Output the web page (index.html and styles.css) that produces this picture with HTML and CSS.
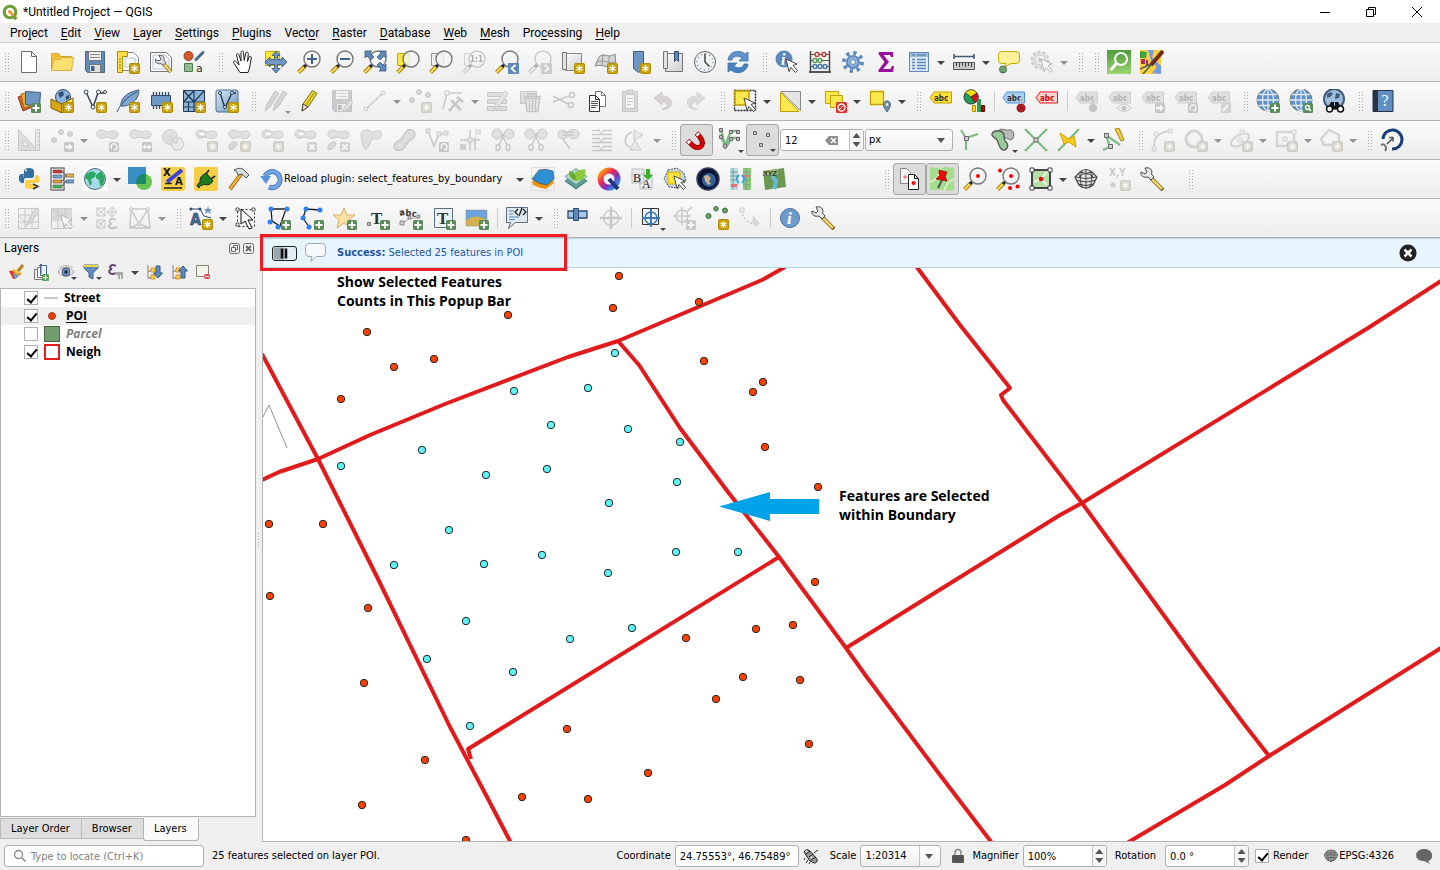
FILE: index.html
```html
<!DOCTYPE html>
<html lang="en">
<head>
<meta charset="utf-8">
<title>*Untitled Project — QGIS</title>
<link rel="stylesheet" href="styles.css">
</head>
<body>
<svg class="paints" aria-hidden="true">
<defs>
<linearGradient id="gGrey" x1="0" y1="0" x2="1" y2="1"><stop offset="0" stop-color="#fff"/><stop offset="1" stop-color="#c8cccb"/></linearGradient>
<linearGradient id="gBlue" x1="0" y1="0" x2="1" y2="1"><stop offset="0" stop-color="#dce8f4"/><stop offset="1" stop-color="#6d97c4"/></linearGradient>
<linearGradient id="gGreen" x1="0" y1="0" x2="0" y2="1"><stop offset="0" stop-color="#4f9a3d"/><stop offset="1" stop-color="#9bd46f"/></linearGradient>
<linearGradient id="gQ" x1="0" y1="0" x2="1" y2="1"><stop offset="0" stop-color="#ffb300"/><stop offset=".35" stop-color="#ee2a57"/><stop offset=".65" stop-color="#7b35c4"/><stop offset="1" stop-color="#13b4e8"/></linearGradient>
</defs>
</svg>
<svg class="sprite" aria-hidden="true">
<symbol id="b-star" viewBox="0 0 24 24"><rect x="13.500" y="13.500" width="10" height="10" rx="1" fill="#c9a10a" stroke="#b08c00"/><path d="M18.500 15v7M15.500 16.700l6 3.600M21.500 16.700l-6 3.600" stroke="#fff" stroke-width="1.300"/><circle cx="18.500" cy="18.500" r="1.600" fill="#fff"/></symbol>
<symbol id="b-plus" viewBox="0 0 24 24"><rect x="14" y="14" width="10" height="10" rx="1.500" fill="#5a8c5a"/><path d="M19 15.500v7M15.500 19h7" stroke="#fff" stroke-width="2"/></symbol>
<symbol id="b-go" viewBox="0 0 24 24"><rect x="14" y="14" width="10" height="10" rx="1.500" fill="#777"/><path d="M15 17.800h4V15.500l4 3.500-4 3.500v-2.300h-4z" fill="#fff"/></symbol>
<symbol id="b-both" viewBox="0 0 24 24"><rect x="14" y="14" width="10" height="10" rx="1.500" fill="#777"/><path d="M14.500 19l3-3v2h3v-2l3 3-3 3v-2h-3v2z" fill="#fff"/></symbol>
<symbol id="b-rot" viewBox="0 0 24 24"><rect x="14" y="14" width="10" height="10" rx="1.500" fill="#777"/><path d="M17 21a3 3 0 1 1 4 0M21.500 19v2.500H19" fill="none" stroke="#fff" stroke-width="1.300"/></symbol>
<symbol id="b-del" viewBox="0 0 24 24"><rect x="14" y="14" width="10" height="10" rx="1.500" fill="#b98a8a"/><path d="M16.500 16.500l5 5M21.500 16.500l-5 5" stroke="#fff" stroke-width="2"/></symbol>
<symbol id="b-lens" viewBox="0 0 24 24"><rect x="14" y="14" width="10" height="10" rx="1.500" fill="#5a8c5a"/><circle cx="18.500" cy="18.500" r="2" fill="none" stroke="#fff" stroke-width="1.300"/><path d="M20 20l2 2" stroke="#fff" stroke-width="1.500"/></symbol>

<symbol id="cursor" viewBox="0 0 24 24"><path d="M11 9l11 5-4 1.500 4.500 5-2 2-4.500-5-2 4z" fill="#fff" stroke="#444"/></symbol>
<symbol id="glass" viewBox="0 0 24 24"><path d="M1.500 22.500L8 16" stroke="#a5811b" stroke-width="4"/><path d="M1.500 22.500L8 16" stroke="#fcd94f" stroke-width="2.200"/><path d="M7 17l3-3" stroke="#222" stroke-width="3"/><circle cx="15" cy="9" r="8" fill="#f2f5f4" fill-opacity=".8" stroke="#777" stroke-width="1.400"/></symbol>
<symbol id="blob" viewBox="0 0 24 24"><path d="M2 6c0-4 4-5 8-3s6 0 9 0c4 0 5 4 3 6s-5 2-7 1-5-1-7 0S2 10 2 6z" fill="#b4bfb4" stroke="#777"/></symbol>
<symbol id="tag" viewBox="0 0 24 24"><path d="M1 8.500l4-5.500h17.500v11H5z"/><text x="5" y="11.500" class="tagtext">abc</text></symbol>

<symbol id="new" viewBox="0 0 24 24"><path d="M4.500 1.500h10l5 5v16h-15zM14.500 1.500v5h5" fill="#fff" stroke="#6b6b6b"/></symbol>
<symbol id="open" viewBox="0 0 24 24"><path d="M1.500 20V3.500h7l2 3h11v13.500z" fill="#f0bf32" stroke="#d3a52f"/><path d="M1.500 20.500L4 9.500h6l2-2h11.500l-2 13z" fill="#ffdf70" stroke="#dcb040"/></symbol>
<symbol id="save" viewBox="0 0 24 24"><path d="M2.500 1.500h19v21h-17l-2-2z" fill="#6189b8" stroke="#49688c"/><path d="M5.500 1.500h13v9h-13z" fill="#eee" stroke="#777"/><path d="M7 4.500h10M7 7.500h10" stroke="#888"/><path d="M6.500 14.500h11v8h-11z" fill="#e0e0e0" stroke="#777"/><path d="M8 16h3.500v5H8z" fill="#3f5f86"/></symbol>
<symbol id="layout" viewBox="0 0 24 24"><path d="M5.500 2.500h12l5 5v13h-17z" fill="#fff" stroke="#888"/><path d="M9 8h10v9H9z" fill="#f4f8fc" stroke="#b3c2d6"/><path d="M1.500 1.500h10v5h-5v16h-5z" fill="#ffdf4c" stroke="#b08c00"/><path d="M3 9h2M3 12h2M3 15h2M3 18h2" stroke="#8a6e00"/><use href="#b-star"/></symbol>
<symbol id="manager" viewBox="0 0 24 24"><path d="M1.500 2.500h16l5 5v14h-21z" fill="#fff" stroke="#777"/><path d="M4 5h12l4 4v10H4z" fill="#f5f8fb" stroke="#b3c2d6"/><path d="M14 13l8 9" stroke="#8a7322" stroke-width="4"/><path d="M14 13l8 9" stroke="#f0d66e" stroke-width="2.500"/><path d="M10 5.500c4-1 6 2 5 5l2 2-3 3-2-2c-4 1-6-1-5.500-4l3.500 1.500 2-2z" fill="#ddd" stroke="#555"/></symbol>
<symbol id="style" viewBox="0 0 24 24"><circle cx="6.500" cy="6" r="4.500" fill="#cf5b2e" stroke="#9b3b18"/><path d="M14 9.500l7-7" stroke="#49688c" stroke-width="3" stroke-linecap="round"/><path d="M2.500 13.500h8v8h-8z" fill="#8cba8c" stroke="#4f7a50"/><text x="14" y="22" font-family="DejaVu Sans" font-size="11" fill="#333">a</text></symbol>
<symbol id="hand" viewBox="0 0 24 24"><path d="M9 22.500L3.500 14c-2.500-3 .5-4 2-2l2.500 3L5.500 5c0-2 2-2 2.500 0l2 6V2.500c0-2 2.500-2 2.500 0l.7 8L14.800 3c.5-1.500 2.500-1 2.500.5l-.8 8L18 7c1-1.500 2.500-.5 2.300 1L18.500 18l-1.500 4.500z" fill="#fff" stroke="#222"/></symbol>
<symbol id="pansel" viewBox="0 0 24 24"><path d="M1.500 1.500h14v14h-14z" fill="#ffe63d" stroke="#cba600"/><path d="M12 1l4 4.500h-2.500v4h4.500V7l5 5-5 5v-2.500h-4.500v4H16L12 23l-4-4.500h2.500v-4H6V17l-5-5 5-5v2.500h4.500v-4H8z" fill="#6d97c4" stroke="#344f70" stroke-width=".8"/></symbol>
<symbol id="zin" viewBox="0 0 24 24"><use href="#glass"/><path d="M15 4v10M10 9h10" stroke="#3c648f" stroke-width="2"/></symbol>
<symbol id="zout" viewBox="0 0 24 24"><use href="#glass"/><path d="M10 9h10" stroke="#3c648f" stroke-width="2"/></symbol>
<symbol id="zfull" viewBox="0 0 24 24"><use href="#glass"/><path d="M2 1h7L7 3l4 4-3 3-4-4-2 2zM23 1h-7l2 2-4 4 3 3 4-4 2 2zM23 21h-7l2-2-4-4 3-3 4 4 2-2z" fill="#5e89b8" stroke="#3c5b7e" stroke-width=".8"/></symbol>
<symbol id="zsel" viewBox="0 0 24 24"><path d="M1.500 3.500h12v12h-12z" fill="#ffe63d" stroke="#cba600"/><use href="#glass"/></symbol>
<symbol id="zlay" viewBox="0 0 24 24"><path d="M2.500 3.500h12v12h-12z" fill="#eee" stroke="#999"/><use href="#glass"/></symbol>
<symbol id="znat" viewBox="0 0 24 24"><path d="M2.500 3.500h12v12h-12z" fill="#eee" stroke="#999"/><use href="#glass"/><text x="8" y="12" font-family="DejaVu Sans Condensed" font-weight="bold" font-size="8" fill="#222">1:1</text></symbol>
<symbol id="zlast" viewBox="0 0 24 24"><use href="#glass"/><path d="M13 13h11v11H13z" fill="#5e89b8"/><path d="M20.500 15l-4 3.500 4 3.500" fill="none" stroke="#fff" stroke-width="1.800"/></symbol>
<symbol id="znext" viewBox="0 0 24 24"><use href="#glass"/><path d="M13 13h11v11H13z" fill="#888"/><path d="M16.500 15l4 3.500-4 3.500" fill="none" stroke="#fff" stroke-width="1.800"/></symbol>
<symbol id="newmap" viewBox="0 0 24 24"><path d="M4.500 3.500h16v17h-16z" fill="url(#gGrey)" stroke="#888"/><path d="M1.500 2.500h4v17h-4z" fill="#e3e5e4" stroke="#777"/><use href="#b-star"/></symbol>
<symbol id="new3d" viewBox="0 0 24 24"><path d="M1 16l4-9c5-5 9 2 16-3l1 12c-7 4-13-3-21 0z" fill="#d5d7d6" stroke="#888"/><path d="M3 12c7-3 13 3 19-1M9 4L8 15M15 6v12" fill="none" stroke="#999"/><use href="#b-star"/></symbol>
<symbol id="newbm" viewBox="0 0 24 24"><path d="M6.500 1.500h10v18l-5 3-5-4z" fill="#6d97c4" stroke="#3c5b7e"/><use href="#b-star"/></symbol>
<symbol id="bms" viewBox="0 0 24 24"><path d="M5.500 3.500h17v18h-17z" fill="url(#gGrey)" stroke="#777"/><path d="M3.500 1.500h4v17h-4z" fill="#e3e5e4" stroke="#777"/><path d="M14.500 1.500h4v10l-2-2-2 2z" fill="#5e89b8" stroke="#2f4e72"/></symbol>
<symbol id="clock" viewBox="0 0 24 24"><circle cx="12" cy="12" r="10.500" fill="#f1f3f2" stroke="#666"/><path d="M12 3.500V12l4.500 4.500" fill="none" stroke="#444" stroke-width="1.500"/><circle cx="12" cy="12" r="8" fill="none" stroke="#5e89b8" stroke-width="1.500" stroke-dasharray="1 3.190"/></symbol>
<symbol id="refresh" viewBox="0 0 24 24"><path d="M2 10C3 1 14-1 19 4l3-2v9h-9l3-3C12 5 7 6 6 10z" fill="#5f93cb" stroke="#3d74af" stroke-width=".8"/><path d="M22 14c-1 9-12 11-17 6l-3 2v-9h9l-3 3c4 3 9 2 10-2z" fill="#4a80bd" stroke="#3d74af" stroke-width=".8"/></symbol>
<symbol id="ident" viewBox="0 0 24 24"><circle cx="9" cy="9" r="8.500" fill="#5c89bb"/><text x="6" y="15" font-family="Liberation Serif" font-weight="bold" font-style="italic" font-size="16" fill="#fff">i</text><use href="#cursor"/></symbol>
<symbol id="abacus" viewBox="0 0 24 24"><path d="M2.500 1v22M21.500 1v22" stroke="#444" stroke-width="1.500"/><path d="M1 22h22" stroke="#555" stroke-width="2"/><path d="M2 4.500h20M2 10.500h20M2 16.500h20" stroke="#555"/><g fill="#fff" stroke-width="1.400"><g stroke="#c0392b"><circle cx="9" cy="4.500" r="2"/><circle cx="16" cy="4.500" r="2"/></g><g stroke="#4f9a50"><circle cx="7" cy="10.500" r="2"/><circle cx="12" cy="10.500" r="2"/></g><g stroke="#3c78a8"><circle cx="7" cy="16.500" r="2"/><circle cx="12" cy="16.500" r="2"/><circle cx="17" cy="16.500" r="2"/></g></g></symbol>
<symbol id="gear" viewBox="0 0 24 24"><circle cx="12" cy="12" r="9" fill="none" stroke="#5c89bb" stroke-width="4" stroke-dasharray="3.200 3.870"/><circle cx="12" cy="12" r="6" fill="#8fb4dc" stroke="#5c89bb" stroke-width="2"/><circle cx="12" cy="12" r="2.500" fill="#f7f7f7" stroke="#5c89bb"/></symbol>
<symbol id="sigma" viewBox="0 0 24 24"><path d="M5 2h14v5h-2l-1-2H9.500l5.500 7-6 7h7.500l1.500-3h2l-1 6H4.500v-2l6-8-6-8z" fill="#9c0f9c"/></symbol>
<symbol id="table" viewBox="0 0 24 24"><path d="M2.500 2.500h19v19h-19z" fill="#dfe9f3" stroke="#5c89bb"/><path d="M3 3h18v4H3z" fill="#9dbcdc"/><path d="M5 5h3M10 5h9M5 9.500h3M10 9.500h9M5 12.500h3M10 12.500h9M5 15.500h3M10 15.500h9M5 18.500h3M10 18.500h9" stroke="#5c89bb" stroke-width="1.300"/></symbol>
<symbol id="ruler" viewBox="0 0 24 24"><path d="M2 6.500h20M2 4v5M22 4v5" stroke="#3c5b7e" stroke-width="1.600"/><path d="M1.500 12.500h21v7h-21z" fill="#c3c7c9" stroke="#555"/><path d="M4.500 13v3M7.500 13v4M10.500 13v3M13.500 13v4M16.500 13v3M19.500 13v4" stroke="#444"/></symbol>
<symbol id="tip" viewBox="0 0 24 24"><path d="M5 1.500h14q3.500 0 3.500 3v6q0 3-3.500 3h-5l-7 4 2-4H5q-3.500 0-3.500-3v-6q0-3 3.500-3z" fill="#fdf19a" stroke="#c9a800"/><circle cx="6" cy="19.500" r="3.500" fill="#6ea26f" stroke="#47704a"/></symbol>
<symbol id="run" viewBox="0 0 24 24"><circle cx="10" cy="10" r="8" fill="#ccc" stroke="#888" stroke-width="3" stroke-dasharray="3 2"/><circle cx="10" cy="10" r="5" fill="#eee" stroke="#777"/><path d="M8.500 7l5 3-5 3z" fill="#777"/><use href="#cursor"/></symbol>
<symbol id="qms" viewBox="0 0 24 24"><path d="M0 0h24v24H0z" fill="url(#gGreen)"/><circle cx="14" cy="9" r="6" fill="none" stroke="#fff" stroke-width="2"/><path d="M9.500 13.500L3.500 20" stroke="#fff" stroke-width="3"/></symbol>
<symbol id="osm" viewBox="0 0 24 24"><path d="M0 0h21v24H0z" fill="#ffcf3e"/><path d="M0 1l7 1-1 6H0z" fill="#3fa33f"/><path d="M8 0h6l-2 7 9 9v8l-9-1 5-6-6-6z" fill="#6b9bea"/><path d="M1 9h4v5H1zM6 10h2v6H6z" fill="#a4305e"/><path d="M0 19l11-5M3 24l8-9" stroke="#46605a" stroke-width="1.500"/><path d="M11 15L23 1" stroke="#712b12" stroke-width="4"/></symbol>

<symbol id="dsm" viewBox="0 0 24 24"><path d="M1 8l8-3 6 13-9 4z" fill="#cf5b2e" stroke="#8e3d1c"/><path d="M4 5l9-2 4 13-10 3z" fill="#e5ae36" stroke="#a57713"/><path d="M8.500 2.500l15 1-1 14-14-2z" fill="#6d97c4" stroke="#3c5b7e"/><use href="#b-plus"/></symbol>
<symbol id="gpkg" viewBox="0 0 24 24"><circle cx="13" cy="8" r="7.500" fill="#8db4dc" stroke="#2f4e72"/><path d="M8 4l5-2 1 4-4 3zM16 7l3-1v4l-3 1z" fill="#2f4e72"/><path d="M1 10l11 5v9L1 19z" fill="#d9a70f" stroke="#7f6000"/><path d="M12 15l11-6v9l-11 6z" fill="#fbe552" stroke="#7f6000"/><use href="#b-star"/></symbol>
<symbol id="shp" viewBox="0 0 24 24"><path d="M3 3l7 15 5-14h7" fill="none" stroke="#33465c" stroke-width="1.500"/><g fill="#fff" stroke="#33465c"><circle cx="3" cy="3" r="2"/><circle cx="10" cy="18" r="2"/><circle cx="15.500" cy="3" r="2"/><circle cx="22" cy="3" r="1.500"/></g><use href="#b-star"/></symbol>
<symbol id="feather" viewBox="0 0 24 24"><path d="M5 17C4 8 14 2 23 1c0 7-5 15-15 16z" fill="#7ea6cf" stroke="#3c5b7e"/><path d="M1 23C5 14 12 7 21 3" fill="none" stroke="#2f4e72"/><use href="#b-star"/></symbol>
<symbol id="chip" viewBox="0 0 24 24"><path d="M4.500 3v17M7.500 3v17M10.500 3v17M13.500 3v17M16.500 3v17M19.500 3v17" stroke="#33465c" stroke-width="1.300"/><path d="M2.500 6.500h19v10h-19z" fill="#6d97c4" stroke="#2f4e72"/><use href="#b-star"/></symbol>
<symbol id="mesh" viewBox="0 0 24 24"><path d="M1.500 1.500h21v21h-21z" fill="#8db4dc" stroke="#233a55"/><path d="M1.500 13h21M12 1.500v21M1.500 1.500L12 13M12 1.500L1.500 13M12 13L22 2M1.500 18H12M6.500 13v9" fill="none" stroke="#233a55" stroke-width="1.200"/><use href="#b-star"/></symbol>
<symbol id="virt" viewBox="0 0 24 24"><rect x="1" y="1" width="22" height="22" rx="2" fill="url(#gBlue)" stroke="#4b6f97"/><path d="M5 4l5 15 7-15h4" fill="none" stroke="#233a55" stroke-width="1.400"/><g fill="#fff" stroke="#233a55"><circle cx="5" cy="4" r="1.500"/><circle cx="10" cy="18" r="1.500"/><circle cx="17" cy="4" r="1.500"/></g><use href="#b-star"/></symbol>
<symbol id="pencils" viewBox="0 0 24 24"><path d="M1 22l2-7L11 2l4 2-8 13z" fill="#a9958e" stroke="#7a6e6b"/><path d="M9 22l2-7 8-13 4 2-8 13z" fill="#a9958e" stroke="#7a6e6b"/></symbol>
<symbol id="pencil" viewBox="0 0 24 24"><path d="M5 22l1-7L15.500 1.500l4.500 3L11 18z" fill="#f5df37" stroke="#6f6218"/><path d="M9 16l8-12" stroke="#b89f10" stroke-width="1.500"/><path d="M6 15l5 3-6 4z" fill="#f2e5c9" stroke="#444"/></symbol>
<symbol id="savee" viewBox="0 0 24 24"><use href="#save"/><path d="M13 23l1-4 6-8 3 2-6 8z" fill="#bbb" stroke="#777"/></symbol>
<symbol id="line" viewBox="0 0 24 24"><path d="M3 20L20 4" stroke="#777" stroke-width="1.500" stroke-dasharray="5 1"/><g fill="#eee" stroke="#777"><circle cx="3" cy="20" r="2"/><circle cx="20" cy="4" r="2"/></g></symbol>
<symbol id="pts" viewBox="0 0 24 24"><g fill="#999" stroke="#777"><circle cx="4" cy="11" r="2.500"/><circle cx="11" cy="3" r="2.500"/><circle cx="20" cy="6" r="2.500"/></g><use href="#b-star"/></symbol>
<symbol id="vert" viewBox="0 0 24 24"><path d="M2 20L6 4h15" fill="none" stroke="#777" stroke-width="1.500"/><path d="M4 2h4v4H4z" fill="#eee" stroke="#777"/><path d="M8 22l10-11M10 11l10 10M16 8l6 5" stroke="#777" stroke-width="2.500"/></symbol>
<symbol id="tabed" viewBox="0 0 24 24"><path d="M1.500 3.500h19v4h-19zM1.500 10.500h19v4h-19zM1.500 17.500h19v4h-19z" fill="#b5b78f" stroke="#777"/><path d="M8 20l2-6 9-12 3 2-9 13z" fill="#ccc" stroke="#777"/></symbol>
<symbol id="trash" viewBox="0 0 24 24"><path d="M1.500 2.500h16v12h-16z" fill="#b5b78f" stroke="#777"/><path d="M5 7.500h17M8 5h10M6.500 9.500h14l-1.500 13H8zM10.500 11v10M13.500 11v10M16.500 11v10" fill="#dcc" stroke="#8d6464" stroke-width="1.400"/></symbol>
<symbol id="cut" viewBox="0 0 24 24"><path d="M1 7l15 8M1 13l16-6" stroke="#777" stroke-width="1.600"/><circle cx="20" cy="6" r="2.500" fill="none" stroke="#876" stroke-width="1.500"/><circle cx="19" cy="16" r="2.500" fill="none" stroke="#876" stroke-width="1.500"/></symbol>
<symbol id="copy" viewBox="0 0 24 24"><path d="M10.500 2.500h6l4 4v11h-10zM16.500 2.500v4h4" fill="#fff" stroke="#777"/><path d="M4.500 6.500h6l4 4v12h-10zM10.500 6.500v4h4" fill="#fff" stroke="#333"/><path d="M6 12.500h7M6 14.500h7M6 16.500h7M6 18.500h5" stroke="#555"/></symbol>
<symbol id="paste" viewBox="0 0 24 24"><path d="M4.500 2.500h15v20h-15z" fill="#aaa" stroke="#777"/><path d="M7.500 5.500h9v14h-9z" fill="#fff" stroke="#777"/><path d="M9 1h6v4H9zM9 9.500h6M9 12.500h6M9 15.500h4" fill="#aaa" stroke="#777"/></symbol>
<symbol id="undo" viewBox="0 0 24 24"><path d="M3 9l8-6v4c8 0 11 5 9 9s-6 5-9 4c5-1 6-3 5-5s-3-2-5-2v3z" fill="#b9907c" stroke="#9b8377"/></symbol>
<symbol id="redo" viewBox="0 0 24 24"><path d="M21 9l-8-6v4C5 7 2 12 4 16s6 5 9 4c-5-1-6-3-5-5s3-2 5-2v3z" fill="#a2b09f" stroke="#8a9688"/></symbol>
<symbol id="sel" viewBox="0 0 24 24"><path d="M1.500 1.500h21v20h-21z" fill="none" stroke="#222" stroke-width="1.400" stroke-dasharray="2 1"/><path d="M2 2h14v14H2z" fill="#fce94f" stroke="#c4a000" stroke-width="1.500"/><use href="#cursor"/></symbol>
<symbol id="selval" viewBox="0 0 24 24"><path d="M3 2.500h19.500v19z" fill="#e4e6e5" stroke="#888"/><path d="M2.500 3v19.500H21z" fill="#fce94f" stroke="#c4a000"/></symbol>
<symbol id="desel" viewBox="0 0 24 24"><path d="M2.500 2.500h13v12h-13z" fill="#fce94f" stroke="#c4a000"/><path d="M7.500 6.500h12v12h-12z" fill="#fce94f" stroke="#c4a000"/><rect x="13" y="13" width="11" height="11" rx="1.500" fill="#d8302b"/><circle cx="18.500" cy="18.500" r="3.500" fill="none" stroke="#fff" stroke-width="1.300"/><path d="M16 21l5-5" stroke="#fff"/></symbol>
<symbol id="selloc" viewBox="0 0 24 24"><path d="M2.500 2.500h13v13h-13z" fill="#fce94f" stroke="#c4a000" stroke-width="1.300"/><path d="M19 23c-6-8-3-11 0-11s6 3 0 11z" fill="#6f8fa5" stroke="#4d6c82"/><circle cx="19" cy="15.500" r="1.300" fill="#fff"/></symbol>
<symbol id="lab" viewBox="0 0 24 24"><use href="#tag" fill="#fbe03a" stroke="#c4a000"/></symbol>
<symbol id="chart" viewBox="0 0 24 24"><circle cx="9" cy="8" r="7" fill="#19a05a" stroke="#333"/><path d="M9 8L3.500 3.500A7 7 0 0 1 15 4z" fill="#fbe000" stroke="#333" stroke-width=".7"/><path d="M9 8l6-4a7 7 0 0 1-2 10z" fill="#d01616" stroke="#333" stroke-width=".7"/><path d="M10.500 16.500h3v6h-3z" fill="#fbe000" stroke="#b58b00"/><path d="M15 10h4v13h-4z" fill="#2a9c52"/><path d="M19.500 16.500h3v6h-3z" fill="#a01010" stroke="#600"/></symbol>
<symbol id="labpin" viewBox="0 0 24 24"><use href="#tag" fill="#a8d0f5" stroke="#4d8fd1"/><circle cx="19" cy="19" r="4.500" fill="#a31d22"/><path d="M19 8v7" stroke="#bbb" stroke-width="3"/></symbol>
<symbol id="labred" viewBox="0 0 24 24"><use href="#tag" fill="#fdd5d5" stroke="#e11" class="redtag"/></symbol>
<symbol id="labg" viewBox="0 0 24 24"><use href="#tag" fill="#bfba98" stroke="#888"/></symbol>
<symbol id="labg-pin" viewBox="0 0 24 24"><use href="#labg"/><circle cx="18" cy="19" r="4" fill="#966"/><path d="M18 9v6" stroke="#888" stroke-width="2.500"/></symbol>
<symbol id="labg-eye" viewBox="0 0 24 24"><use href="#labg"/><path d="M9 19q7-8 14 0-7 7-14 0z" fill="#eee" stroke="#777"/><circle cx="16" cy="19" r="2.500" fill="#777"/></symbol>
<symbol id="labg-go" viewBox="0 0 24 24"><use href="#labg"/><use href="#b-go"/></symbol>
<symbol id="labg-rot" viewBox="0 0 24 24"><use href="#labg"/><use href="#b-rot"/></symbol>
<symbol id="labg-ed" viewBox="0 0 24 24"><use href="#labg"/><rect x="14" y="14" width="10" height="10" rx="1" fill="#998"/><path d="M16 22l5-6" stroke="#fff" stroke-width="2"/></symbol>
<symbol id="globe" viewBox="0 0 24 24"><circle cx="12" cy="11" r="11" fill="#5b93cf" stroke="#777"/><path d="M12 0v22M1 11h22M3 5.500h18M3 16.500h18" stroke="#e3e7ea" stroke-width="1.300"/><ellipse cx="12" cy="11" rx="5.500" ry="11" fill="none" stroke="#e3e7ea" stroke-width="1.300"/></symbol>
<symbol id="wadd" viewBox="0 0 24 24"><use href="#globe"/><use href="#b-plus"/></symbol>
<symbol id="wfind" viewBox="0 0 24 24"><use href="#globe"/><use href="#b-lens"/></symbol>
<symbol id="wbin" viewBox="0 0 24 24"><circle cx="12" cy="10" r="10" fill="#9ebddb" stroke="#3e5a7c" stroke-width="2"/><path d="M5 5l4-2 2 2-3 3-3 1zM14 4l4 1-1 4-4 1z" fill="#3e5a7c"/><path d="M5 20l4-7h3v4h1v-4h3l4 7z" fill="#111"/><circle cx="7.500" cy="20" r="3" fill="#fff" stroke="#111" stroke-width="1.500"/><circle cx="18.500" cy="20" r="3" fill="#fff" stroke="#111" stroke-width="1.500"/></symbol>
<symbol id="help" viewBox="0 0 24 24"><path d="M2 1.500h20v21H2z" fill="#5f8ec2" stroke="#27333e"/><path d="M2 1h5v22H2z" fill="#27333e"/><text x="10.500" y="17" font-family="Liberation Serif" font-size="16" fill="#fff">?</text></symbol>

<symbol id="setsq" viewBox="0 0 24 24"><path d="M1.500 1.500v21h19zM6 12v6h6z" fill="#c6b6aa" stroke="#777" fill-rule="evenodd"/><path d="M18.500 1.500h4v21h-4zM20 5h2M20 9h2M20 13h2M20 17h2" fill="#ddd" stroke="#777"/></symbol>
<symbol id="mvpt" viewBox="0 0 24 24"><g fill="#999" stroke="#777"><circle cx="4" cy="12" r="2.500"/><circle cx="11" cy="4" r="2.500"/><circle cx="20" cy="6" r="2.500"/></g><use href="#b-go"/></symbol>
<symbol id="f-rot" viewBox="0 0 24 24"><use href="#blob"/><use href="#b-rot"/></symbol>
<symbol id="f-sc" viewBox="0 0 24 24"><use href="#blob"/><use href="#b-both"/></symbol>
<symbol id="f-simp" viewBox="0 0 24 24"><circle cx="9" cy="9" r="7.500" fill="#bbb" stroke="#888"/><path d="M13 10h7l3 6-3 6h-7l-3-6z" fill="#ddd" stroke="#777"/><path d="M8 8l8 7M16 11v4h-4" fill="none" stroke="#777"/></symbol>
<symbol id="f-ring" viewBox="0 0 24 24"><use href="#blob"/><ellipse cx="8" cy="6" rx="4" ry="2.300" fill="#fff" stroke="#777"/><use href="#b-star"/></symbol>
<symbol id="f-part" viewBox="0 0 24 24"><use href="#blob"/><path d="M2 21c-1-4 3-8 7-7 3 2-2 9-7 7z" fill="#aaa" stroke="#777"/><use href="#b-star"/></symbol>
<symbol id="f-dring" viewBox="0 0 24 24"><use href="#blob"/><ellipse cx="8" cy="6" rx="4" ry="2.300" fill="#fff" stroke="#777"/><use href="#b-del"/></symbol>
<symbol id="f-dpart" viewBox="0 0 24 24"><use href="#blob"/><path d="M2 21c-1-4 3-8 7-7 3 2-2 9-7 7z" fill="#aaa" stroke="#777"/><use href="#b-del"/></symbol>
<symbol id="f-resh" viewBox="0 0 24 24"><path d="M2 6c0-4 6-5 9-3s7-1 10 0c3 3 1 8-3 8-4-1-6 0-7 4s-4 8-6 5c-1-4-3-9-3-14z" fill="#b4bfb4" stroke="#777"/></symbol>
<symbol id="f-off" viewBox="0 0 24 24"><path d="M2 19c0-6 5-5 8-9s4-9 9-8 5 7 1 9-5 4-7 8-11 5-11 0z" fill="#bcc6b9" stroke="#777" stroke-width="1.500"/><path d="M5 18c0-4 5-4 7-7s4-6 6-6 3 3 0 5-5 5-7 8-6 3-6 0z" fill="none" stroke="#888"/></symbol>
<symbol id="f-rev" viewBox="0 0 24 24"><path d="M3 3l6 15 5-12h7" fill="none" stroke="#777" stroke-width="1.500"/><path d="M1 1h4v4H1zM12 4h4v4h-4zM19 3h4v4h-4z" fill="#ccc" stroke="#777"/><use href="#b-rot"/></symbol>
<symbol id="f-trim" viewBox="0 0 24 24"><path d="M2 12h20M12 2v21M17 9v14" fill="none" stroke="#777" stroke-width="1.500"/><path d="M10 10h4v4h-4z" fill="#ddd" stroke="#777"/><path d="M17 1h6v6h-6z" fill="#bba"/><path d="M2 16h6v6H2z" fill="#c88"/></symbol>
<symbol id="f-split" viewBox="0 0 24 24"><circle cx="6" cy="6" r="5" fill="#bbb" stroke="#777"/><circle cx="18" cy="6" r="5" fill="#bbb" stroke="#777"/><path d="M14 4L8 17M10 5l6 12" stroke="#777" stroke-width="1.500"/><ellipse cx="7" cy="19.500" rx="2" ry="3" fill="none" stroke="#777" stroke-width="1.500"/><ellipse cx="17" cy="19.500" rx="2" ry="3" fill="none" stroke="#777" stroke-width="1.500"/></symbol>
<symbol id="f-merge" viewBox="0 0 24 24"><path d="M1 6c0-6 8-4 9-1 2-5 12-5 12 1s-8 6-11 2C9 12 1 12 1 6z" fill="#bbb" stroke="#777"/><path d="M6 4h10M6 7h11M6 11c3 5 5 7 7 10" fill="none" stroke="#777" stroke-width="1.500"/></symbol>
<symbol id="f-attr" viewBox="0 0 24 24"><path d="M2 2.500h7M14 2.500h8M2 6.500h20M2 10.500h7M14 10.500h8M2 14.500h20M2 18.500h7M14 18.500h8M2 22.500h20" fill="none" stroke="#777" stroke-width="1.300"/><path d="M9 1l2 5M14 1l-2 5M9 9l2 5M14 9l-2 5M9 17l2 5M14 17l-2 5" stroke="#777"/></symbol>
<symbol id="f-rsym" viewBox="0 0 24 24"><path d="M11 2l9 5-9 5zM12 12l6 10H7z" fill="#ddd" stroke="#777"/><path d="M7 19C0 17 1 7 9 4" fill="none" stroke="#777" stroke-width="1.500"/></symbol>
<symbol id="magnet" viewBox="0 0 24 24"><path d="M3.500 12.500l6 5.500c3 2.500 7 2 8.500-1s0-6-5.500-12" fill="none" stroke="#8a0000" stroke-width="5"/><path d="M4 13l5.500 5c3 2.500 7 2 8.500-1s0-6-5-11.500" fill="none" stroke="#d40000" stroke-width="3.600"/><path d="M4 13l2 1.800M13 5.500l1.600 1.800" stroke="#fff" stroke-width="3.600"/></symbol>
<symbol id="snapv" viewBox="0 0 24 24"><path d="M4 2l4 16 6-15h8M4 9l5 10 6-9h8" fill="none" stroke="#7fb984" stroke-width="2.500"/><g fill="#bbb" stroke="#666"><path d="M2.500.500h3v3h-3zM12.500 2.500h3v3h-3zM19.500 2.500h3v3h-3zM2.500 7.500h3v3h-3zM12.500 9.500h3v3h-3zM19.500 9.500h3v3h-3z"/><circle cx="8" cy="18" r="2"/></g></symbol>
<symbol id="snapp" viewBox="0 0 24 24"><path d="M3.500 3.500h3v3h-3zM16.500 5.500h3v3h-3zM9.500 15.500h3v3h-3z" fill="#ccc" stroke="#666"/></symbol>
<symbol id="topo" viewBox="0 0 24 24"><path d="M3 2l5 8v12M8 10l12-4" fill="none" stroke="#7fb984" stroke-width="2.200"/><path d="M6.500 8.500h4v4h-4z" fill="#ccc" stroke="#666"/></symbol>
<symbol id="avoid" viewBox="0 0 24 24"><path d="M7 3c4-4 7 0 11-1s6 4 4 8-5 0-8 0z" fill="#bbb" stroke="#666"/><path d="M1 7c-1-4 8-6 11-2s-1 5 3 9 0 9-3 8-4-4-5-8-5-4-6-7z" fill="#97cb98" stroke="#555" stroke-width="1.300"/></symbol>
<symbol id="inter" viewBox="0 0 24 24"><path d="M1 1l22 22M23 1L1 23" stroke="#7fb984" stroke-width="2.200"/><path d="M10 10h4v4h-4z" fill="#ccc" stroke="#666"/></symbol>
<symbol id="trace" viewBox="0 0 24 24"><path d="M22 1L1 23" stroke="#7fb984" stroke-width="2.200"/><path d="M3 5l9 6 5-3 2 11-7-5-5 2z" fill="#f7cc17" stroke="#caa100"/></symbol>
<symbol id="selfs" viewBox="0 0 24 24"><path d="M1 22l7-3L4 7l14 10" fill="none" stroke="#7fb984" stroke-width="2.200"/><path d="M2.500 5.500h4v4h-4zM6.500 16.500h4v4h-4z" fill="#ccc" stroke="#666"/><path d="M13 1l4-1 5 12-3 1z" fill="#f5cd3a" stroke="#a5811b"/></symbol>
<symbol id="arc" viewBox="0 0 24 24"><path d="M3 21Q2 4 19 3" fill="none" stroke="#999" stroke-width="2"/><path d="M1 19h4v4H1zM3 4h4v4H3zM17 1h4v4h-4z" fill="#ddd" stroke="#999"/><use href="#b-star"/></symbol>
<symbol id="circ" viewBox="0 0 24 24"><circle cx="10" cy="11" r="8" fill="none" stroke="#999" stroke-width="3"/><use href="#b-star"/></symbol>
<symbol id="elli" viewBox="0 0 24 24"><ellipse cx="11" cy="12" rx="10" ry="5" transform="rotate(-30 11 12)" fill="none" stroke="#999" stroke-width="2"/><path d="M9 10h4v4H9zM11 2h4v4h-4z" fill="#ddd" stroke="#999"/><use href="#b-star"/></symbol>
<symbol id="recta" viewBox="0 0 24 24"><path d="M3 4h17v14H3z" fill="none" stroke="#999" stroke-width="2.500"/><path d="M9 9h4v4H9zM18 2h4v4h-4z" fill="#ddd" stroke="#999"/><use href="#b-star"/></symbol>
<symbol id="poly" viewBox="0 0 24 24"><path d="M10 2l10 5v10H5L2 11z" fill="none" stroke="#999" stroke-width="2.500"/><use href="#b-star"/></symbol>
<symbol id="reshape" viewBox="0 0 24 24"><path d="M3 11a9.500 9.500 0 1 1 9 10" fill="none" stroke="#173d7c" stroke-width="3"/><path d="M7 16l6-6M9 9.500h4v4" fill="none" stroke="#555" stroke-width="1.500"/><path d="M1 17c3-2 7 2 4 6" fill="none" stroke="#777" stroke-width="2"/></symbol>

<symbol id="python" viewBox="0 0 24 24"><path d="M6 11V8h7V7H4c-3 0-3 9 1 9h2v-3q0-2 2-2h6q2 0 2-2V4c0-4-10-4-10 0v3" fill="#3571a3"/><path d="M18 8h2c3 0 3 8 0 8h-7v1h5v2c0 4-10 4-10 0v-4q0-2 2-2h6q2 0 2-2z" fill="#ffcf3f"/><circle cx="9" cy="3.500" r="1" fill="#fff"/><path d="M16 17l5 2.500-5 2.500" fill="none" stroke="#333" stroke-width="1.500"/></symbol>
<symbol id="model" viewBox="0 0 24 24"><path d="M1 1h13v22H1z" fill="#fff" stroke="#777" stroke-width="1.500"/><g stroke="#555" stroke-width=".7"><path d="M3 3h9v3H3z" fill="#e02d2d"/><path d="M3 8h9v3H3z" fill="#6ba7e0"/><path d="M3 13h9v3H3z" fill="#f39b28"/><path d="M3 18h9v3H3z" fill="#3dbc55"/><path d="M16 7h8v3h-8z" fill="#f3b648"/><path d="M16 13h8v3h-8z" fill="#6ba7e0"/></g><path d="M12 4l4 5M12 14l4-5M12 19l4-5" stroke="#555"/></symbol>
<symbol id="earth" viewBox="0 0 24 24"><path d="M0 0h24v24H0z" fill="#fff"/><circle cx="12" cy="12" r="10.500" fill="#a7dbe9" stroke="#4f6c7a"/><path d="M3 7l6-3 4 2-1 4-4 2 1 4-2 3-2-6-3-2zM13 8l5-4 4 6-2 8-3 1-1-6-3-2z" fill="#2da862"/></symbol>
<symbol id="shapes" viewBox="0 0 24 24"><circle cx="16" cy="15" r="8" fill="#67c455"/><path d="M0 0h18v17H0z" fill="#3b8ec6"/><path d="M8.300 17a8 8 0 0 1 9.700-9.700V17z" fill="#1c8a66"/></symbol>
<symbol id="xa" viewBox="0 0 24 24"><rect width="24" height="24" rx="2" fill="#f7cf46"/><text x="2" y="9" class="xatext">X</text><text x="14" y="18" class="xatext">A</text><path d="M6 15L21 3" stroke="#3c42d8" stroke-width="4"/><path d="M3 21h18M4 16.500h7" stroke="#222" stroke-width="1.500"/></symbol>
<symbol id="plug" viewBox="0 0 24 24"><rect width="24" height="24" rx="2" fill="#f7cf46"/><path d="M3 19c1-4 3-2 3-5 0-6 5-7 6-8l7 8c-3 5-8 4-9 3-2 3-4 0-5 4z" fill="#1d7a1d" stroke="#123"/><path d="M12 7l3-4M17 12l4-3" stroke="#333" stroke-width="2"/></symbol>
<symbol id="hammer" viewBox="0 0 24 24"><path d="M3 22L14 7" stroke="#8c6414" stroke-width="4"/><path d="M3 22L14 7" stroke="#f3ad36" stroke-width="2.500"/><path d="M7 3q7-4 11 1l4 4-3 3-4-4-4 1-1-3z" fill="#d9dcdd" stroke="#555"/></symbol>
<symbol id="reload" viewBox="0 0 24 24"><path d="M9 20A8 8 0 1 0 5 9" fill="none" stroke="#356db5" stroke-width="5"/><path d="M9 20A8 8 0 1 0 5 9" fill="none" stroke="#6fa5e4" stroke-width="3.500"/><path d="M0 9l6 8 5-8z" fill="#5b93d8"/></symbol>
<symbol id="stack" viewBox="0 0 24 24"><path d="M.500.500h23v23H.500z" fill="none" stroke="#ddd"/><path d="M1 15l4-4 17 2 1 3-8 6q-7-1-13-4z" fill="#f0940f"/><path d="M1 12l7-9q7-2 14 1l1 8-7 6Q7 17 1 12z" fill="#2f8fd4" stroke="#444" stroke-width=".6"/></symbol>
<symbol id="leaf" viewBox="0 0 24 24"><path d="M1 14l11-7 11 7-11 8z" fill="#5c9d94" stroke="#4a7d78"/><path d="M1 9.500l11-8 11 8-11 8z" fill="#b5d5cf" stroke="#6a9e9a"/><path d="M12 14C7 5 14 3 21 2c2 9-3 12-9 12z" fill="#8ccc3c"/><path d="M12 14C5 12 5 6 5 4c6 1 8 5 7 10z" fill="#68ae2a"/></symbol>
<symbol id="qq" viewBox="0 0 24 24"><circle cx="12" cy="12" r="8.500" fill="none" stroke="url(#gQ)" stroke-width="6"/><path d="M12 12l9 10" stroke="#24357e" stroke-width="4"/></symbol>
<symbol id="ba" viewBox="0 0 24 24"><path d="M2 2h12v14H2zM10 7h12v15H10z" fill="#e8eaec" stroke="#b6babd"/><text x="3" y="15" font-family="Liberation Serif" font-size="12" fill="#222">B</text><text x="12" y="21" font-family="Liberation Serif" font-size="12" fill="#222">A</text><path d="M16 2h4v6h3l-5 5-5-5h3z" fill="#35b426"/></symbol>
<symbol id="selpoly" viewBox="0 0 24 24"><path d="M5 3l9-2 7 5 2 8-7 7-10-1-5-8z" fill="#c5d5e5" stroke="#555" stroke-dasharray="2 1"/><path d="M5 5h12v12H5z" fill="#ffe536" stroke="#d2b100"/><use href="#cursor"/></symbol>
<symbol id="night" viewBox="0 0 24 24"><circle cx="12" cy="12" r="11" fill="#0c1330" stroke="#333f63" stroke-width="1.500"/><circle cx="13" cy="13" r="7" fill="#2f5f96"/><path d="M8 9l4-1 3 3-2 3 2 3-3 1-3-4z" fill="#c8b28a"/></symbol>
<symbol id="cmp" viewBox="0 0 24 24"><path d="M1 1h8v22H1z" fill="#b9dce4"/><path d="M14 1h8v22h-8z" fill="#8cc77a"/><path d="M1 5h8M1 9h8M1 13h8M4 1v22M14 5h8M14 9h8M14 13h8M14 18h8M17 1v22" stroke="#77a386"/><path d="M2 17h6v3H2zM15 8h5v2h-5z" fill="#e87272"/><path d="M10 8q-4 4 0 8M13 8q4 4 0 8" fill="none" stroke="#35a5e5" stroke-width="2"/></symbol>
<symbol id="xyz" viewBox="0 0 24 24"><path d="M1 4l21-3 2 19-21 3z" fill="#6a9850"/><path d="M12 5q-3 5 2 9l-2 8" fill="none" stroke="#65bada" stroke-width="4"/><path d="M2 4l14-2v5L2 9z" fill="#9bb365"/><text x="1" y="9" font-family="Liberation Sans" font-style="italic" font-weight="bold" font-size="7" fill="#234">XYZ</text></symbol>
<symbol id="cpdoc" viewBox="0 0 24 24"><path d="M3.500 1.500h6l4 4v11h-10z" fill="#f5f5f5" stroke="#888"/><path d="M11.500 7.500h6l4 4v11h-10zM17.500 7.500v4h4" fill="#fff" stroke="#222"/><circle cx="8" cy="10" r="1.800" fill="#ff7c7c"/><circle cx="16.500" cy="16" r="2" fill="#f00"/></symbol>
<symbol id="pin" viewBox="0 0 24 24"><path d="M0 0l7 1 8-1 9 1v23L12 23H0z" fill="#a3dd8e"/><path d="M0 15q9-2 11-15M14 24q3-9 10-12" fill="none" stroke="#d9efc8" stroke-width="2"/><path d="M8 21l4-8" stroke="#555" stroke-width="2"/><path d="M9 3l8 2-1 3-1 1 2 5-11-2 4-4-1-1z" fill="#f00a0a" stroke="#930000" stroke-width=".7"/></symbol>
<symbol id="zpt" viewBox="0 0 24 24"><use href="#glass"/><circle cx="15" cy="9" r="2" fill="#f00"/></symbol>
<symbol id="zpts" viewBox="0 0 24 24"><use href="#glass"/><g fill="#f00"><circle cx="15" cy="9" r="2"/><circle cx="4" cy="3.500" r="2"/><circle cx="14" cy="21" r="2"/><circle cx="21.500" cy="19.500" r="2"/></g></symbol>
<symbol id="ext" viewBox="0 0 24 24"><path d="M3 3h18v18H3z" fill="#b4dfa7" stroke="#444" stroke-width="2"/><path d="M5 15l7-3 7-8M12 12l6 6" stroke="#fff" stroke-width="1.500" fill="none"/><path d="M1 1h4v4H1zM19 1h4v4h-4zM1 19h4v4H1zM19 19h4v4h-4z" fill="#fff" stroke="#444"/><circle cx="12" cy="12" r="2.300" fill="#f00"/></symbol>
<symbol id="wire" viewBox="0 0 24 24"><path d="M6 5q6-5 12 0l5 5-4 8q-7 6-14 0L1 10z" fill="#e6e6e6" stroke="#444" stroke-width="1.200"/><path d="M1 10q11 3 22 0M3 13.500q9 3 18 0M4 17q8 3 16 0M12 3v19M8 4q-4 9 1 17M16 4q4 9-1 17M5 10q7-7 14 0M4 6l3 4M20 6l-3 4M6 5q6 3 12 0" fill="none" stroke="#444"/></symbol>
<symbol id="xy" viewBox="0 0 24 24"><text x="2" y="9" font-family="DejaVu Sans Condensed" font-weight="bold" font-size="10" fill="#777">X,Y</text><circle cx="6" cy="18" r="2.500" fill="#888"/><use href="#b-star"/></symbol>
<symbol id="wrench" viewBox="0 0 24 24"><path d="M11 11l12 12" stroke="#6d5c1f" stroke-width="4"/><path d="M12 12l10 10" stroke="#f2d566" stroke-width="2.500"/><path d="M5 1c5-1 8 2 6.500 6l2.500 3-3 3-3-3C4 11 0 9 1 5l4 2 2-2z" fill="#e7e7e7" stroke="#444"/></symbol>

<symbol id="m-ed" viewBox="0 0 24 24"><path d="M1.500 2.500h20v20h-20zM1.500 9h20M1.500 16h20M8 2.500v20M15 2.500v20M1 9l7 7" fill="#eee" stroke="#777"/><path d="M9 20l3-7 7-11 3 2-7 12z" fill="#bba8a4" stroke="#777"/></symbol>
<symbol id="m-sel" viewBox="0 0 24 24"><path d="M1.500 2.500h20v20h-20z" fill="#eee" stroke="#777"/><path d="M2 3h20v8L2 14z" fill="#a8a98a"/><path d="M2 14h20M8 2v20M15 2v20M2 3l14 12" stroke="#777"/><use href="#cursor"/></symbol>
<symbol id="m-eps" viewBox="0 0 24 24"><path d="M2 2h8v8H2zM2 2l8 8M10 2l-8 8M12 6l5-5 5 5-5 5zM12 6h10M17 1v10M2 14h8v8H2zM2 14l8 8M10 14l-8 8" fill="none" stroke="#777"/><path d="M21 14c-4-3-9 0-5 4-5 2-1 6 6 3" fill="none" stroke="#777" stroke-width="2"/></symbol>
<symbol id="m-tri" viewBox="0 0 24 24"><path d="M2 22L3 3h17l2 19zM3 3l8 15 9-15M11 18l-9 4M11 18l11 4" fill="none" stroke="#777" stroke-width="1.500"/><g fill="#ddd" stroke="#777"><circle cx="3" cy="3" r="1.500"/><circle cx="20" cy="3" r="1.500"/><circle cx="11" cy="18" r="1.500"/></g></symbol>
<symbol id="annl" viewBox="0 0 24 24"><path d="M2 3h9l4 7 7 2" fill="none" stroke="#2c4b70"/><g fill="#2c4b70"><circle cx="2" cy="3" r="1.500"/><circle cx="11" cy="3" r="1.500"/><path d="M19 0l1 3h3l-2 2 1 3-3-2-3 2 1-3-2-2h3z" fill="#6d97c4"/></g><text x="1" y="19" font-family="DejaVu Sans Condensed" font-weight="bold" font-size="16" fill="#446a94" stroke="#233a55" stroke-width=".5">A</text><use href="#b-star"/></symbol>
<symbol id="selann" viewBox="0 0 24 24"><path d="M3.500 3.500h17v17h-17z" fill="none" stroke="#333" stroke-dasharray="2 2"/><path d="M2 2h3v3H2zM18 2h3v3h-3zM2 17h3v3H2z" fill="#fff" stroke="#333" stroke-width=".8"/><path d="M7 3v15l4-3 4 8 3-1-4-8h5z" fill="#fff" stroke="#111"/></symbol>
<symbol id="apoly" viewBox="0 0 24 24"><path d="M4 3h15l-6 17-8-5z" fill="none" stroke="#222" stroke-width="1.300"/><g fill="#2f80f7"><circle cx="4" cy="3" r="2.500"/><circle cx="20" cy="3" r="2.500"/><circle cx="3" cy="16" r="2.500"/><circle cx="11" cy="21" r="2.500"/></g><use href="#b-plus"/></symbol>
<symbol id="aline" viewBox="0 0 24 24"><path d="M20 4L6 3 3 12l6 9" fill="none" stroke="#222" stroke-width="1.300"/><g fill="#2f80f7"><circle cx="6" cy="3" r="2.500"/><circle cx="20" cy="4" r="2.500"/><circle cx="3" cy="12" r="2.500"/><circle cx="9" cy="21" r="2.500"/></g><use href="#b-plus"/></symbol>
<symbol id="astar" viewBox="0 0 24 24"><path d="M11 2l3 7h8l-6 5 2 8-7-5-7 5 2-8-6-5h8z" fill="#fbe1a2" stroke="#d2ae68"/><use href="#b-plus"/></symbol>
<symbol id="atext" viewBox="0 0 24 24"><path d="M1.500 16.500h3v3h-3z" fill="#bbb" stroke="#777"/><text x="5" y="18" font-family="Liberation Serif" font-weight="bold" font-size="17" fill="#333">T</text><use href="#b-plus"/></symbol>
<symbol id="acurve" viewBox="0 0 24 24"><text x="1" y="10" font-family="DejaVu Sans Condensed" font-weight="bold" font-size="9" fill="#333" rotate="-15 0 15">abc</text><path d="M3 18q7-7 17-6" fill="none" stroke="#777" stroke-dasharray="2 1"/><path d="M1 15h4v4H1zM9 10h3v3H9zM18 9h3v3h-3z" fill="#ccc" stroke="#777" stroke-width=".8"/><use href="#b-plus"/></symbol>
<symbol id="abox" viewBox="0 0 24 24"><path d="M2.500 2.500h18v19h-18z" fill="#edf2f4" stroke="#5c6e7b"/><text x="5" y="18" font-family="Liberation Serif" font-weight="bold" font-size="17" fill="#333">T</text><use href="#b-plus"/></symbol>
<symbol id="apic" viewBox="0 0 24 24"><path d="M1 4h21v16H1z" fill="#6ba3dc"/><path d="M1 14q10-7 21 0v6H1z" fill="#d6b24d"/><path d="M1 4h21v16H1z" fill="none" stroke="#999" stroke-width=".6"/><use href="#b-plus"/></symbol>
<symbol id="form" viewBox="0 0 24 24"><path d="M1.500 1.500h21v15h-12l-7 6 2-6h-4z" fill="#dde8ef" stroke="#5a6e7e"/><path d="M4 5h5M4 8h4M4 11h10M4 13.500h6" stroke="#5c89bb"/><path d="M13 3l-3 3 3 3M18 3l3 3-3 3M17 2l-3 8" fill="none" stroke="#222" stroke-width="1.300"/></symbol>
<symbol id="pinlab" viewBox="0 0 24 24"><path d="M2 5h19v7H2z" fill="#a9c9e8" stroke="#2c4b70" stroke-width="1.300"/><path d="M7.500 2.500h5v12h-5z" fill="#5e89b8" stroke="#2c4b70"/></symbol>
<symbol id="cross" viewBox="0 0 24 24"><circle cx="12" cy="12" r="7.500" fill="none" stroke="#777" stroke-width="1.300"/><path d="M12 1v22M1 12h22" stroke="#777" stroke-width="2.500"/></symbol>
<symbol id="adv" viewBox="0 0 24 24"><path d="M3.500 2.500h16v16h-16z" fill="#eef4fa" stroke="#333"/><circle cx="12" cy="12" r="6" fill="none" stroke="#3f78b5" stroke-width="1.500"/><path d="M12 3v18M3 12h18" stroke="#3f78b5" stroke-width="2"/></symbol>
<symbol id="advp" viewBox="0 0 24 24"><circle cx="10" cy="10" r="6" fill="none" stroke="#777" stroke-width="1.500"/><path d="M10 1v18M1 10h18M14 6l6-5" stroke="#777" stroke-width="1.500"/><use href="#b-plus"/></symbol>
<symbol id="gpts" viewBox="0 0 24 24"><g fill="#69a06a" stroke="#3f7040"><circle cx="3.500" cy="10" r="2.500"/><circle cx="11" cy="2.800" r="2.300"/><circle cx="20" cy="4.500" r="2.500"/></g><use href="#b-star"/></symbol>
<symbol id="brush" viewBox="0 0 24 24"><path d="M4 4q0 8 8 13h8" fill="none" stroke="#777" stroke-width="1.500" stroke-dasharray="2 2"/><path d="M2 2h4v4H2z" fill="#ddd" stroke="#888"/><path d="M15 9l7 9-5 3-3-5z" fill="#aa9"/></symbol>
<symbol id="info" viewBox="0 0 24 24"><circle cx="12" cy="12" r="9.500" fill="#6d9bcb" stroke="#4a6d94"/><text x="9" y="18" font-family="Liberation Serif" font-weight="bold" font-style="italic" font-size="17" fill="#fff">i</text></symbol>

<symbol id="p-style" viewBox="0 0 18 18"><path d="M2 8l8-2 5 5-8 5z" fill="#e89730"/><path d="M2 8l4 0 4 7-4 1z" fill="#dc3a32"/><path d="M6 6l5 0 3 4-5 0z" fill="#f0d65a"/><path d="M11 8l5-6" stroke="#b58026" stroke-width="3"/><path d="M6 10l6 3-4 3z" fill="#5ca5d7"/></symbol>
<symbol id="p-grp" viewBox="0 0 18 18"><path d="M2.500 6.500h8v10h-8z" fill="#eee" stroke="#777"/><path d="M5.500 4.500h8v10h-8z" fill="#fff" stroke="#777"/><path d="M8.500 2.500h6v10h-6zM9 1v10M7 3l2-2 2 2" fill="#edf3f8" stroke="#446a94"/><rect x="10" y="11" width="7" height="7" rx="1" fill="#5fa35f"/><path d="M13.500 12v5M11 14.500h5" stroke="#fff"/></symbol>
<symbol id="p-eye" viewBox="0 0 18 18"><path d="M1 9q8-10 16 0-8 9-16 0z" fill="#f6f6f6" stroke="#999"/><circle cx="9" cy="9" r="4" fill="#6d97c4" stroke="#557"/><circle cx="9" cy="9" r="1.700" fill="#123"/><path d="M2 5q7-5 14 0" fill="none" stroke="#bbb"/></symbol>
<symbol id="p-fil" viewBox="0 0 18 18"><path d="M2 2h14v3l-5 5v6l-4-2v-4L2 5z" fill="#5e8cc0" stroke="#446a94"/><path d="M2 2h14v2H2z" fill="#f3d83b"/></symbol>
<symbol id="p-eps" viewBox="0 0 18 18"><path d="M9 3C4 0 1 5 5 6c-5 1-3 7 4 4" fill="none" stroke="#694570" stroke-width="2"/><path d="M8 9h8v7h-2v-4h-1v4h-2v-4H8z" fill="#aaa"/></symbol>
<symbol id="p-exp" viewBox="0 0 18 18"><path d="M3 2v13h4M3 8h4" fill="none" stroke="#999" stroke-width="1.300"/><path d="M6 5h4v4H6zM6 12h4v4H6z" fill="#ffce61" stroke="#d9931b"/><path d="M11 3h4v7h2.500L13 15l-4.500-5H11z" fill="#5e8cc0" stroke="#36587f"/></symbol>
<symbol id="p-col" viewBox="0 0 18 18"><path d="M3 2v13h4M3 8h4" fill="none" stroke="#999" stroke-width="1.300"/><path d="M6 5h4v4H6zM6 12h4v4H6z" fill="#ffce61" stroke="#d9931b"/><path d="M11 15h4V8h2.500L13 3 8.500 8H11z" fill="#5e8cc0" stroke="#36587f"/></symbol>
<symbol id="p-rem" viewBox="0 0 18 18"><path d="M1.500 2.500h12v11h-12z" fill="#f4f4ef" stroke="#888375"/><rect x="9" y="11" width="6" height="5" rx="2" fill="#e5484f"/><path d="M10 13.500h4" stroke="#fff"/></symbol>
</svg>

<header class="titlebar">
  <svg class="logo" viewBox="0 0 18 18" aria-hidden="true"><path d="M10 10l6 7" stroke="#6ca037" stroke-width="4"/><circle cx="9" cy="9" r="6.500" fill="#fff" stroke="#6ca037" stroke-width="3.500"/><path d="M7 7h4l-1 1 4 4-2 2-4-4-1 1z" fill="#f0922b"/></svg>
  <h1>*Untitled Project — QGIS</h1>
  <div class="winctl">
    <button aria-label="Minimize"><svg viewBox="0 0 12 12"><path d="M1 6.500h10"/></svg></button>
    <button aria-label="Restore"><svg viewBox="0 0 12 12"><path d="M1.500 3.500h7v7h-7zM3.500 3V1.500h7v7H9"/></svg></button>
    <button aria-label="Close"><svg viewBox="0 0 12 12"><path d="M1 1l10 10M11 1L1 11"/></svg></button>
  </div>
</header>

<nav class="menubar" aria-label="Main menu">
  <button>Pro<u>j</u>ect</button><button><u>E</u>dit</button><button><u>V</u>iew</button><button><u>L</u>ayer</button><button><u>S</u>ettings</button><button><u>P</u>lugins</button><button>Vect<u>o</u>r</button><button><u>R</u>aster</button><button><u>D</u>atabase</button><button><u>W</u>eb</button><button><u>M</u>esh</button><button>Pro<u>c</u>essing</button><button><u>H</u>elp</button>
</nav>

<div class="toolbar">
  <i class="grip"></i>
  <button aria-label="New project"><svg><use href="#new"/></svg></button>
  <button aria-label="Open project"><svg><use href="#open"/></svg></button>
  <button aria-label="Save project"><svg><use href="#save"/></svg></button>
  <button aria-label="New layout"><svg><use href="#layout"/></svg></button>
  <button aria-label="Layout manager"><svg><use href="#manager"/></svg></button>
  <button aria-label="Style manager"><svg><use href="#style"/></svg></button>
  <i class="grip"></i>
  <button aria-label="Pan map"><svg><use href="#hand"/></svg></button>
  <button aria-label="Pan to selection"><svg><use href="#pansel"/></svg></button>
  <button aria-label="Zoom in"><svg><use href="#zin"/></svg></button>
  <button aria-label="Zoom out"><svg><use href="#zout"/></svg></button>
  <button aria-label="Zoom full"><svg><use href="#zfull"/></svg></button>
  <button aria-label="Zoom to selection"><svg><use href="#zsel"/></svg></button>
  <button aria-label="Zoom to layer"><svg><use href="#zlay"/></svg></button>
  <button aria-label="Zoom to native resolution" disabled><svg><use href="#znat"/></svg></button>
  <button aria-label="Zoom last"><svg><use href="#zlast"/></svg></button>
  <button aria-label="Zoom next" disabled><svg><use href="#znext"/></svg></button>
  <button aria-label="New map view"><svg><use href="#newmap"/></svg></button>
  <button aria-label="New 3D map view"><svg><use href="#new3d"/></svg></button>
  <button aria-label="New spatial bookmark"><svg><use href="#newbm"/></svg></button>
  <button aria-label="Show bookmarks"><svg><use href="#bms"/></svg></button>
  <button aria-label="Temporal controller"><svg><use href="#clock"/></svg></button>
  <button aria-label="Refresh"><svg><use href="#refresh"/></svg></button>
  <i class="grip"></i>
  <button aria-label="Identify features"><svg><use href="#ident"/></svg></button>
  <button aria-label="Field calculator"><svg><use href="#abacus"/></svg></button>
  <button aria-label="Processing toolbox"><svg><use href="#gear"/></svg></button>
  <button aria-label="Statistical summary"><svg><use href="#sigma"/></svg></button>
  <button class="drop" aria-label="Attribute table"><svg><use href="#table"/></svg></button>
  <button class="drop" aria-label="Measure line"><svg><use href="#ruler"/></svg></button>
  <button aria-label="Map tips"><svg><use href="#tip"/></svg></button>
  <button class="drop" aria-label="Run feature action" disabled><svg><use href="#run"/></svg></button>
  <i class="grip"></i><i class="grip"></i>
  <button aria-label="Search services"><svg><use href="#qms"/></svg></button>
  <button aria-label="OSM place search"><svg><use href="#osm"/></svg></button>
</div>

<div class="toolbar">
  <i class="grip"></i>
  <button aria-label="Data source manager"><svg><use href="#dsm"/></svg></button>
  <button aria-label="New GeoPackage layer"><svg><use href="#gpkg"/></svg></button>
  <button aria-label="New shapefile layer"><svg><use href="#shp"/></svg></button>
  <button aria-label="New SpatiaLite layer"><svg><use href="#feather"/></svg></button>
  <button aria-label="New scratch layer"><svg><use href="#chip"/></svg></button>
  <button aria-label="New mesh layer"><svg><use href="#mesh"/></svg></button>
  <button aria-label="New virtual layer"><svg><use href="#virt"/></svg></button>
  <i class="grip"></i>
  <button class="corner" aria-label="Current edits" disabled><svg><use href="#pencils"/></svg></button>
  <button aria-label="Toggle editing"><svg><use href="#pencil"/></svg></button>
  <button aria-label="Save edits" disabled><svg><use href="#savee"/></svg></button>
  <button class="drop" aria-label="Digitize with segment" disabled><svg><use href="#line"/></svg></button>
  <button aria-label="Add point feature" disabled><svg><use href="#pts"/></svg></button>
  <button class="drop" aria-label="Vertex tool" disabled><svg><use href="#vert"/></svg></button>
  <button aria-label="Modify attributes" disabled><svg><use href="#tabed"/></svg></button>
  <button aria-label="Delete selected" disabled><svg><use href="#trash"/></svg></button>
  <button aria-label="Cut features" disabled><svg><use href="#cut"/></svg></button>
  <button aria-label="Copy features"><svg><use href="#copy"/></svg></button>
  <button aria-label="Paste features" disabled><svg><use href="#paste"/></svg></button>
  <button aria-label="Undo" disabled><svg><use href="#undo"/></svg></button>
  <button aria-label="Redo" disabled><svg><use href="#redo"/></svg></button>
  <i class="grip"></i>
  <button class="drop" aria-label="Select features"><svg><use href="#sel"/></svg></button>
  <button class="drop" aria-label="Select by value"><svg><use href="#selval"/></svg></button>
  <button class="drop" aria-label="Deselect features"><svg><use href="#desel"/></svg></button>
  <button class="drop" aria-label="Select by location"><svg><use href="#selloc"/></svg></button>
  <i class="grip"></i>
  <button aria-label="Layer labeling"><svg><use href="#lab"/></svg></button>
  <button aria-label="Layer diagrams"><svg><use href="#chart"/></svg></button>
  <i class="sep"></i>
  <button aria-label="Highlight pinned labels"><svg><use href="#labpin"/></svg></button>
  <button aria-label="Unplaced labels"><svg><use href="#labred"/></svg></button>
  <i class="sep"></i>
  <button aria-label="Pin labels" disabled><svg><use href="#labg-pin"/></svg></button>
  <button aria-label="Show or hide labels" disabled><svg><use href="#labg-eye"/></svg></button>
  <button aria-label="Move label" disabled><svg><use href="#labg-go"/></svg></button>
  <button aria-label="Rotate label" disabled><svg><use href="#labg-rot"/></svg></button>
  <button aria-label="Change label" disabled><svg><use href="#labg-ed"/></svg></button>
  <i class="grip"></i>
  <button aria-label="Add web service"><svg><use href="#wadd"/></svg></button>
  <button aria-label="Find web service"><svg><use href="#wfind"/></svg></button>
  <button aria-label="Metasearch"><svg><use href="#wbin"/></svg></button>
  <i class="grip"></i>
  <button aria-label="Help contents"><svg><use href="#help"/></svg></button>
</div>

<div class="toolbar">
  <i class="grip"></i>
  <button aria-label="Advanced digitizing" disabled><svg><use href="#setsq"/></svg></button>
  <button class="drop" aria-label="Move feature" disabled><svg><use href="#mvpt"/></svg></button>
  <button aria-label="Rotate feature" disabled><svg><use href="#f-rot"/></svg></button>
  <button aria-label="Scale feature" disabled><svg><use href="#f-sc"/></svg></button>
  <button aria-label="Simplify feature" disabled><svg><use href="#f-simp"/></svg></button>
  <button aria-label="Add ring" disabled><svg><use href="#f-ring"/></svg></button>
  <button aria-label="Add part" disabled><svg><use href="#f-part"/></svg></button>
  <button aria-label="Fill ring" disabled><svg><use href="#f-ring"/></svg></button>
  <button aria-label="Delete ring" disabled><svg><use href="#f-dring"/></svg></button>
  <button aria-label="Delete part" disabled><svg><use href="#f-dpart"/></svg></button>
  <button aria-label="Reshape features" disabled><svg><use href="#f-resh"/></svg></button>
  <button aria-label="Offset curve" disabled><svg><use href="#f-off"/></svg></button>
  <button aria-label="Reverse line" disabled><svg><use href="#f-rev"/></svg></button>
  <button aria-label="Trim or extend" disabled><svg><use href="#f-trim"/></svg></button>
  <button aria-label="Split features" disabled><svg><use href="#f-split"/></svg></button>
  <button aria-label="Split parts" disabled><svg><use href="#f-split"/></svg></button>
  <button aria-label="Merge features" disabled><svg><use href="#f-merge"/></svg></button>
  <button aria-label="Merge attributes" disabled><svg><use href="#f-attr"/></svg></button>
  <button class="drop" aria-label="Rotate point symbols" disabled><svg><use href="#f-rsym"/></svg></button>
  <i class="grip"></i>
  <button class="on" aria-pressed="true" aria-label="Enable snapping"><svg><use href="#magnet"/></svg></button>
  <button class="corner" aria-label="Snapping layers"><svg><use href="#snapv"/></svg></button>
  <button class="on corner" aria-pressed="true" aria-label="Snapping type"><svg><use href="#snapp"/></svg></button>
  <span class="field spin tol"><input type="text" value="12" aria-label="Tolerance"><button class="clear" aria-label="Clear"><svg viewBox="0 0 13 9"><path d="M0 4.500L4 0h9v9H4z" fill="#8d8d8d"/><path d="M6 2l5 5M11 2L6 7" stroke="#fff" stroke-width="1.500"/></svg></button><span class="steps"><button aria-label="Increase"></button><button aria-label="Decrease"></button></span></span>
  <span class="field combo unit"><select aria-label="Units"><option>px</option></select></span>
  <button aria-label="Topological editing"><svg><use href="#topo"/></svg></button>
  <button class="corner" aria-label="Avoid overlap"><svg><use href="#avoid"/></svg></button>
  <button aria-label="Snap on intersection"><svg><use href="#inter"/></svg></button>
  <button class="drop" aria-label="Enable tracing"><svg><use href="#trace"/></svg></button>
  <button aria-label="Self-snapping"><svg><use href="#selfs"/></svg></button>
  <i class="grip"></i>
  <button aria-label="Circular string" disabled><svg><use href="#arc"/></svg></button>
  <button class="drop" aria-label="Add circle" disabled><svg><use href="#circ"/></svg></button>
  <button class="drop" aria-label="Add ellipse" disabled><svg><use href="#elli"/></svg></button>
  <button class="drop" aria-label="Add rectangle" disabled><svg><use href="#recta"/></svg></button>
  <button class="drop" aria-label="Add polygon" disabled><svg><use href="#poly"/></svg></button>
  <i class="grip"></i>
  <button aria-label="Reshape tool"><svg><use href="#reshape"/></svg></button>
</div>

<div class="toolbar">
  <i class="grip"></i>
  <button aria-label="Python console"><svg><use href="#python"/></svg></button>
  <button aria-label="Model designer"><svg><use href="#model"/></svg></button>
  <button class="drop" aria-label="Quick map services"><svg><use href="#earth"/></svg></button>
  <button aria-label="Shape tools"><svg><use href="#shapes"/></svg></button>
  <button aria-label="Field edit"><svg><use href="#xa"/></svg></button>
  <button aria-label="Plugin manager"><svg><use href="#plug"/></svg></button>
  <button aria-label="Plugin builder"><svg><use href="#hammer"/></svg></button>
  <button class="drop reload"><svg><use href="#reload"/></svg>Reload plugin: select_features_by_boundary</button>
  <button aria-label="Layer stack"><svg><use href="#stack"/></svg></button>
  <button aria-label="Land cover"><svg><use href="#leaf"/></svg></button>
  <button aria-label="Quick query"><svg><use href="#qq"/></svg></button>
  <button aria-label="Rename"><svg><use href="#ba"/></svg></button>
  <button aria-label="Select features by boundary"><svg><use href="#selpoly"/></svg></button>
  <button aria-label="Earth imagery"><svg><use href="#night"/></svg></button>
  <button aria-label="Compare tables"><svg><use href="#cmp"/></svg></button>
  <button aria-label="XYZ tiles"><svg><use href="#xyz"/></svg></button>
  <i class="gap"></i>
  <i class="grip"></i>
  <button class="on" aria-pressed="true" aria-label="Copy coordinate"><svg><use href="#cpdoc"/></svg></button>
  <button class="on" aria-pressed="true" aria-label="Show in external map"><svg><use href="#pin"/></svg></button>
  <button aria-label="Zoom to coordinate"><svg><use href="#zpt"/></svg></button>
  <button aria-label="Multi location zoom"><svg><use href="#zpts"/></svg></button>
  <button class="drop" aria-label="Copy extent"><svg><use href="#ext"/></svg></button>
  <button aria-label="Coordinate conversion"><svg><use href="#wire"/></svg></button>
  <button aria-label="Add XY layer" disabled><svg><use href="#xy"/></svg></button>
  <button aria-label="Settings"><svg><use href="#wrench"/></svg></button>
  <i class="gap small"></i>
  <i class="grip"></i>
</div>

<div class="toolbar">
  <i class="grip"></i>
  <button aria-label="Edit mesh" disabled><svg><use href="#m-ed"/></svg></button>
  <button class="drop" aria-label="Select mesh elements" disabled><svg><use href="#m-sel"/></svg></button>
  <button aria-label="Transform mesh" disabled><svg><use href="#m-eps"/></svg></button>
  <button class="drop" aria-label="Force by lines" disabled><svg><use href="#m-tri"/></svg></button>
  <i class="grip"></i>
  <button class="drop" aria-label="New annotation layer"><svg><use href="#annl"/></svg></button>
  <button aria-label="Select annotation"><svg><use href="#selann"/></svg></button>
  <button aria-label="Polygon annotation"><svg><use href="#apoly"/></svg></button>
  <button aria-label="Line annotation"><svg><use href="#aline"/></svg></button>
  <button aria-label="Marker annotation"><svg><use href="#astar"/></svg></button>
  <button aria-label="Text annotation"><svg><use href="#atext"/></svg></button>
  <button aria-label="Text along line"><svg><use href="#acurve"/></svg></button>
  <button aria-label="Text box"><svg><use href="#abox"/></svg></button>
  <button aria-label="Picture annotation"><svg><use href="#apic"/></svg></button>
  <i class="sep"></i>
  <button class="drop" aria-label="Form annotation"><svg><use href="#form"/></svg></button>
  <i class="grip"></i>
  <button aria-label="Georeference"><svg><use href="#pinlab"/></svg></button>
  <button aria-label="Center" disabled><svg><use href="#cross"/></svg></button>
  <i class="sep"></i>
  <button class="corner" aria-label="GPS position"><svg><use href="#adv"/></svg></button>
  <button aria-label="Add GPS vertex" disabled><svg><use href="#advp"/></svg></button>
  <button aria-label="Create GPS feature"><svg><use href="#gpts"/></svg></button>
  <button aria-label="Reset track" disabled><svg><use href="#brush"/></svg></button>
  <i class="sep"></i>
  <button aria-label="GPS information"><svg><use href="#info"/></svg></button>
  <button aria-label="GPS settings"><svg><use href="#wrench"/></svg></button>
</div>

<main class="workspace">
  <aside class="dock">
    <div class="docktitle"><h2>Layers</h2>
      <button aria-label="Float panel"><svg viewBox="0 0 11 11"><rect x=".5" y=".5" width="10" height="10" rx="2"/><path d="M2.500 4.500h4v4h-4zM4.500 4V2.500h4v4H7"/></svg></button>
      <button aria-label="Close panel"><svg viewBox="0 0 11 11"><rect x=".5" y=".5" width="10" height="10" rx="2"/><path d="M3 3l5 5M8 3L3 8" stroke-width="2"/></svg></button>
    </div>
    <div class="docktools">
      <button aria-label="Open styling panel"><svg><use href="#p-style"/></svg></button>
      <button aria-label="Add group"><svg><use href="#p-grp"/></svg></button>
      <button class="corner" aria-label="Map themes"><svg><use href="#p-eye"/></svg></button>
      <button class="corner" aria-label="Filter legend"><svg><use href="#p-fil"/></svg></button>
      <button class="drop" aria-label="Filter by expression"><svg><use href="#p-eps"/></svg></button>
      <button aria-label="Expand all"><svg><use href="#p-exp"/></svg></button>
      <button aria-label="Collapse all"><svg><use href="#p-col"/></svg></button>
      <button aria-label="Remove layer"><svg><use href="#p-rem"/></svg></button>
    </div>
    <ul class="tree">
      <li><label><input type="checkbox" checked><i class="sym street"></i><span>Street</span></label></li>
      <li class="current"><label><input type="checkbox" checked><i class="sym poi"></i><span>POI</span></label></li>
      <li class="hiddenlayer"><label><input type="checkbox"><i class="sym parcel"></i><span>Parcel</span></label></li>
      <li><label><input type="checkbox" checked><i class="sym neigh"></i><span>Neigh</span></label></li>
    </ul>
    <div class="tabs" role="tablist"><button role="tab">Layer Order</button><button role="tab">Browser</button><button role="tab" aria-selected="true">Layers</button></div>
  </aside>
  <div class="splitter"></div>
  <section class="canvas" aria-label="Map canvas">
    <svg class="map" viewBox="263 238 1177 604" preserveAspectRatio="xMinYMin slice">
      <path d="M263 417l6-12 18 43" fill="none" stroke="#8e9497"/>
      <g class="roads">
        <path d="M262 354L318 459L378 579L450 727L487 797L511 843"/>
        <path d="M262 480L279 472L318 459L370 435L445 404L568 357L618 341L762 280L785 267"/>
        <path d="M618 341L639 365L680 428L728 492L779 557L846 648L866 676L940 775L992 843"/>
        <path d="M779 557L468 749L471 759"/>
        <path d="M916 266L960 325L1010 388L1001 395L1003 400L1082 503L1200 665L1244 724L1269 756"/>
        <path d="M1441 281L1368 328L1082 503L1060 515L846 648"/>
        <path d="M1441 648L1269 756L1225 785L1127 843"/>
      </g>
      <g class="pois">
        <circle cx="619" cy="276" r="3.700"/><circle cx="613" cy="308" r="3.700"/><circle cx="699" cy="302" r="3.700"/><circle cx="508" cy="315" r="3.700"/><circle cx="367" cy="332" r="3.700"/><circle cx="394" cy="367" r="3.700"/><circle cx="434" cy="359" r="3.700"/><circle cx="341" cy="399" r="3.700"/><circle cx="704" cy="361" r="3.700"/><circle cx="763" cy="382" r="3.700"/><circle cx="753" cy="392" r="3.700"/><circle cx="765" cy="447" r="3.700"/><circle cx="818" cy="487" r="3.700"/><circle cx="269" cy="524" r="3.700"/><circle cx="323" cy="524" r="3.700"/><circle cx="270" cy="596" r="3.700"/><circle cx="368" cy="608" r="3.700"/><circle cx="364" cy="683" r="3.700"/><circle cx="425" cy="760" r="3.700"/><circle cx="362" cy="805" r="3.700"/><circle cx="466" cy="840" r="3.700"/><circle cx="522" cy="797" r="3.700"/><circle cx="588" cy="799" r="3.700"/><circle cx="648" cy="773" r="3.700"/><circle cx="567" cy="729" r="3.700"/><circle cx="686" cy="638" r="3.700"/><circle cx="756" cy="629" r="3.700"/><circle cx="793" cy="625" r="3.700"/><circle cx="815" cy="582" r="3.700"/><circle cx="743" cy="677" r="3.700"/><circle cx="716" cy="699" r="3.700"/><circle cx="800" cy="680" r="3.700"/><circle cx="809" cy="744" r="3.700"/>
      </g>
      <g class="pois selected">
        <circle cx="615" cy="353" r="3.700"/><circle cx="514" cy="391" r="3.700"/><circle cx="588" cy="388" r="3.700"/><circle cx="551" cy="425" r="3.700"/><circle cx="628" cy="429" r="3.700"/><circle cx="680" cy="442" r="3.700"/><circle cx="422" cy="450" r="3.700"/><circle cx="341" cy="466" r="3.700"/><circle cx="486" cy="475" r="3.700"/><circle cx="547" cy="469" r="3.700"/><circle cx="677" cy="482" r="3.700"/><circle cx="609" cy="503" r="3.700"/><circle cx="449" cy="530" r="3.700"/><circle cx="394" cy="565" r="3.700"/><circle cx="484" cy="564" r="3.700"/><circle cx="542" cy="555" r="3.700"/><circle cx="608" cy="573" r="3.700"/><circle cx="676" cy="552" r="3.700"/><circle cx="738" cy="552" r="3.700"/><circle cx="466" cy="621" r="3.700"/><circle cx="570" cy="639" r="3.700"/><circle cx="632" cy="628" r="3.700"/><circle cx="427" cy="659" r="3.700"/><circle cx="513" cy="672" r="3.700"/><circle cx="470" cy="726" r="3.700"/>
      </g>
      <path d="M719 506.500L770 492v7h49v15h-49v7z" fill="#00a2e8"/>
      <g class="notes">
        <text x="337" y="287">Show Selected Features</text>
        <text x="337" y="306">Counts in This Popup Bar</text>
        <text x="839" y="501">Features are Selected</text>
        <text x="839" y="520">within Boundary</text>
      </g>
    </svg>
    <div class="message" role="status">
      <svg class="pause" viewBox="0 0 25 15" aria-hidden="true"><rect x=".5" y=".5" width="24" height="14" rx="2.500" fill="#e3eef6" stroke="#222"/><path d="M1.500 1.500h11v12h-11z" fill="#9aa5ad"/><path d="M10 2.500v10M14 2.500v10" stroke="#111" stroke-width="2.500"/></svg>
      <svg class="bubble" viewBox="0 0 21 20" aria-hidden="true"><path d="M4 .5h13q3.500 0 3.500 3v7q0 3-3.500 3h-6l-5 5 1-5H4q-3.500 0-3.500-3v-7q0-3 3.500-3z" fill="#f8fbfd" stroke="#a3a8ab"/></svg>
      <p><b>Success:</b> Selected 25 features in POI</p>
      <button aria-label="Close message"><svg viewBox="0 0 18 18"><circle cx="9" cy="9" r="8.500" fill="#222"/><path d="M5.500 5.500l7 7M12.500 5.500l-7 7" stroke="#fff" stroke-width="2.500"/></svg></button>
    </div>
    <div class="callout"></div>
  </section>
</main>

<footer class="status">
  <label class="field locate"><svg viewBox="0 0 14 14" aria-hidden="true"><circle cx="5.500" cy="5.500" r="4" fill="none" stroke="#888" stroke-width="1.300"/><path d="M8.500 8.500l4 4" stroke="#888" stroke-width="1.500"/></svg><input type="text" placeholder="Type to locate (Ctrl+K)" aria-label="Type to locate"></label>
  <span class="msg">25 features selected on layer POI.</span>
  <label for="coord">Coordinate</label><span class="field coord"><input id="coord" type="text" value="24.75553°, 46.75489°"></span>
  <button class="ico extents" aria-label="Toggle extents"><svg viewBox="0 0 16 16"><path d="M1 4q2-4 6-1l7 8q1 4-3 4l-4-2z" fill="#999" stroke="#222"/><path d="M3 6l4-3M6 9l4-3M8 12l5-3M11 5l4-3M2 10l-1 2M5 12l-2 3M7 14l-1 2" stroke="#222"/><path d="M3 3l1 1M8 9l1 1" stroke="#fff" stroke-width="2"/></svg></button>
  <label for="scale">Scale</label><span class="field combo scale"><select id="scale"><option>1:20314</option></select></span>
  <button class="ico lock" aria-label="Lock scale"><svg viewBox="0 0 12 16"><path d="M3 8V4.500q0-3 3-3t3 3V8" fill="none" stroke="#888" stroke-width="1.500"/><rect y="7" width="12" height="8" rx="1" fill="#555"/></svg></button>
  <label for="mag">Magnifier</label><span class="field spin mag"><input id="mag" type="text" value="100%"><span class="steps"><button aria-label="Increase"></button><button aria-label="Decrease"></button></span></span>
  <label for="rot" class="rotlabel">Rotation</label><span class="field spin mag"><input id="rot" type="text" value="0.0 °"><span class="steps"><button aria-label="Increase"></button><button aria-label="Decrease"></button></span></span>
  <label class="render"><input type="checkbox" checked>Render</label>
  <button class="crs"><svg viewBox="0 0 14 14" aria-hidden="true"><path d="M3 2q4-2 8 0l3 4-3 5q-4 3-8 0L0 6z" fill="#aaa" stroke="#666"/><path d="M0 6h14M2 8.500h10M7 1v12M4 2q-1 6 1 10M10 2q1 6-1 10M2 4h10" fill="none" stroke="#666"/></svg>EPSG:4326</button>
  <button class="ico log" aria-label="Messages"><svg viewBox="0 0 16 16"><path d="M8 1c10 0 10 11 4 12l2 3-6-3C-3 13-2 1 8 1z" fill="#666"/></svg></button>
</footer>
</body>
</html>
```
FILE: styles.css
```css
* { box-sizing: border-box; }
body {
  margin: 0;
  height: 100vh;
  display: flex;
  flex-direction: column;
  background: #efefef;
  color: #000;
  font: 11px/14px "DejaVu Sans Condensed", "DejaVu Sans", sans-serif;
  overflow: hidden;
}
button {
  margin: 0;
  padding: 0;
  border: 0;
  background: none;
  font: inherit;
  color: inherit;
}
h1, h2, p, ul { margin: 0; padding: 0; font: inherit; list-style: none; }
.paints { position: absolute; width: 0; height: 0; }
.sprite { display: none; }
.tagtext { font: bold 8px "DejaVu Sans Condensed", sans-serif; fill: var(--tag-ink, #333); stroke: none; }
.redtag { --tag-ink: #d00000; }
.xatext { font: bold 10px "DejaVu Sans", sans-serif; fill: #111; }

/* title and menu */
.titlebar { display: flex; align-items: center; height: 23px; background: #fff; padding-left: 2px; flex: none; }
.titlebar h1 { flex: 1; padding-left: 5px; font: 12px/16px Roboto, sans-serif; }
.logo { width: 16px; height: 16px; }
.winctl { display: flex; }
.winctl button { width: 46px; height: 20px; display: grid; place-items: center; }
.winctl svg { width: 12px; height: 12px; fill: none; stroke: #000; }
.menubar { display: flex; flex: none; height: 20px; padding-left: 3px; border-bottom: 1px solid #d0d0d0; font: 12px/20px Roboto, sans-serif; }
.menubar button { padding: 0 6px 0 7px; }
.menubar u { text-underline-offset: 2px; }

/* tool bars */
.toolbar {
  display: flex;
  align-items: center;
  flex: none;
  height: 39px;
  border-bottom: 1px solid #b4b4b4;
  background: linear-gradient(#fafafa, #ededed);
}
.toolbar > button { position: relative; width: 33px; height: 32px; flex: none; display: flex; align-items: center; padding-left: 4px; }
.toolbar > button svg { width: 24px; height: 24px; flex: none; }
.toolbar > button.drop { width: 45px; }
.drop::after, .corner::after {
  content: "";
  position: absolute;
  right: 3px;
  top: 50%;
  margin-top: -1px;
  border: 4px solid transparent;
  border-top: 4px solid #444;
  border-bottom: 0;
}
.corner::after { top: auto; bottom: 3px; right: 2px; border-width: 3px 3px 0; }
button:disabled svg { filter: grayscale(.8); opacity: .35; }
button:disabled::after { opacity: .55; }
.toolbar > button.on { border: 1px solid #a6a6a6; border-radius: 3px; background: #dcdcdc; padding-left: 3px; }
.grip {
  flex: none;
  width: 16px;
  height: 19px;
  padding: 0 4px 0 8px;
  background:
    repeating-linear-gradient(transparent 0 1px, #f4f4f4 1px 3px) content-box,
    repeating-linear-gradient(90deg, #a8a8a8 0 1px, transparent 1px 3px) content-box;
  background-origin: content-box;
}
.grip:first-child { width: 13px; padding-left: 5px; }
.sep { flex: none; width: 1px; height: 20px; margin: 0 3px; background: #ccc; }
.gap { flex: none; width: 86px; }
.gap.small { width: 12px; }
.toolbar > button.reload { width: auto; padding-right: 25px; white-space: nowrap; }

/* input fields */
.field { display: flex; align-items: center; height: 22px; background: #fff; border: 1px solid #b0b0b0; border-radius: 3px; overflow: hidden; flex: none; }
.field input, .field select { flex: 1; min-width: 0; height: 100%; border: 0; padding: 0 4px; background: none; font: inherit; color: inherit; outline: 0; }
.field input::placeholder { color: #808080; }
.field select { appearance: none; }
.combo { position: relative; background: linear-gradient(#fff, #f0f0f0); }
.combo::after { content: ""; position: absolute; right: 7px; top: 8px; border: 4px solid transparent; border-top: 5px solid #555; border-bottom: 0; pointer-events: none; }
.steps { display: flex; flex-direction: column; justify-content: center; gap: 4px; width: 14px; height: 100%; border-left: 1px solid #c4c4c4; align-items: center; background: #f6f6f6; }
.steps button { width: 8px; height: 5px; background: #555; clip-path: polygon(0 100%, 50% 0, 100% 100%); }
.steps button:last-child { clip-path: polygon(0 0, 100% 0, 50% 100%); }
.clear svg { width: 13px; height: 9px; margin-right: 11px; display: block; }
.tol { width: 84px; margin: 0 1px; }
.unit { width: 88px; margin-right: 1px; }
.unit select { padding-left: 3px; }

/* layers dock */
.workspace { flex: 1; min-height: 0; display: flex; }
.dock { width: 256px; flex: none; display: flex; flex-direction: column; }
.docktitle { display: flex; align-items: center; gap: 3px; height: 20px; padding: 0 2px 0 4px; }
.docktitle h2 { flex: 1; font: 12px/16px Roboto, sans-serif; }
.docktitle svg { display: block; width: 11px; height: 11px; fill: #f4f4f4; stroke: #666; }
.docktools { display: flex; align-items: center; height: 30px; padding: 0 0 2px 4px; }
.docktools button { position: relative; width: 25px; height: 22px; padding-left: 3px; }
.docktools svg { display: block; width: 18px; height: 18px; }
.docktools .drop { width: 38px; }
.tree { flex: 1; background: #fff; border: 1px solid #b4b4b4; }
.tree li { height: 18px; font: bold 12px/18px "Open Sans", sans-serif; }
.tree label { display: flex; align-items: center; height: 18px; padding-left: 23px; }
input[type="checkbox"] { appearance: none; position: relative; margin: 0; width: 14px; height: 14px; border: 1px solid #b0b0b0; background: #fff; flex: none; }
input[type="checkbox"]:checked::after { content: ""; position: absolute; left: 4px; top: 1px; width: 4px; height: 8px; border: solid #000; border-width: 0 2px 2px 0; transform: rotate(40deg); }
.sym { flex: none; width: 16px; height: 16px; margin: 0 6px; }
.street { width: 14px; height: 2px; background: #c6cbce; }
.poi { width: 8px; height: 8px; margin: 0 10px; border-radius: 50%; background: #f03c00; border: 1px solid #8e4630; }
.parcel { background: #729b6f; border: 1px solid #47653f; }
.neigh { border: 2px solid #e31a1c; }
.current { background: #efefef; }
.current span { text-decoration: underline; text-underline-offset: 2px; }
.hiddenlayer span { font-style: italic; color: #808080; }
.tabs { display: flex; align-items: flex-start; height: 25px; padding-top: 1px; }
.tabs button { height: 21px; padding: 0 11px 0 10px; border: 1px solid #bcbcbc; border-right: 0; background: #dedede; }
.tabs button[aria-selected] { height: 23px; border: 1px solid #b4b4b4; border-top: 0; border-radius: 0 0 3px 3px; background: #fafafa; }
.splitter { flex: none; width: 6px; align-self: center; height: 16px; background: radial-gradient(circle, #aaa 0 1px, transparent 1px) 1px 0 / 3px 3px repeat-y; }

/* map canvas */
.canvas { position: relative; flex: 1; min-width: 0; background: #fff; border-left: 1px solid #b4b4b4; border-bottom: 1px solid #b4b4b4; }
.map { position: absolute; inset: 0; width: 100%; height: 100%; }
.roads { fill: none; stroke: #e31a1c; stroke-width: 4; stroke-linejoin: round; }
.pois { fill: #ff4000; stroke: #232323; stroke-width: 1; }
.pois.selected { fill: #5cf6f6; }
.notes { font: bold 14px "Open Sans", sans-serif; }
.message { position: relative; display: flex; align-items: center; height: 30px; padding: 0 23px 0 9px; background: #e7f5fe; border: 1px solid #b9d3e6; border-width: 1px 0; color: #2554a1; }
.message p { flex: 1; padding-left: 11px; }
.message button { width: 18px; height: 18px; }
.pause { width: 25px; height: 15px; margin-right: 8px; }
.bubble { width: 21px; height: 20px; }
.callout { position: absolute; left: -3px; top: -4px; width: 307px; height: 37px; border: 3px solid #ed1c24; }

/* status bar */
.status { display: flex; align-items: center; flex: none; height: 28px; padding: 0 8px 0 4px; gap: 4px; }
.locate { width: 200px; padding-left: 8px; }
.locate svg { width: 14px; height: 14px; }
.msg { flex: 1; padding-left: 4px; white-space: nowrap; }
.coord { width: 124px; }
.scale { width: 81px; }
.status .combo::before { content: ""; position: absolute; right: 20px; top: 0; bottom: 0; border-left: 1px solid #c4c4c4; }
.ico svg { display: block; width: 16px; height: 16px; }
.extents { margin-right: 7px; }
.lock { margin: 0 2px 0 5px; }
.mag { width: 84px; }
.rotlabel { margin: 0 5px 0 4px; }
.render { display: flex; align-items: center; gap: 4px; padding-left: 2px; }
.crs { display: flex; align-items: center; gap: 1px; margin: 0 18px 0 12px; }
.crs svg { width: 14px; height: 14px; }
```
